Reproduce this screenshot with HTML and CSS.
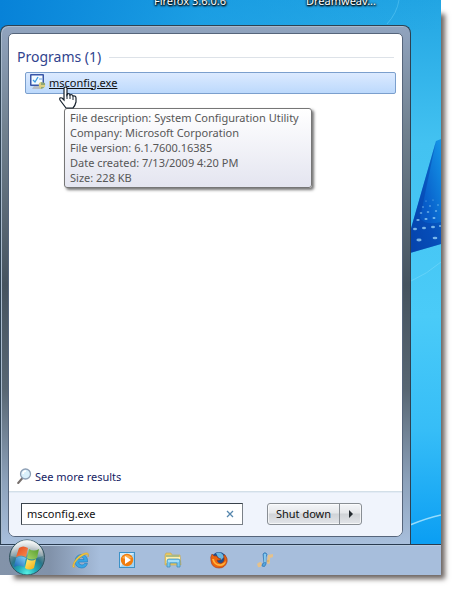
FILE: index.html
```html
<!DOCTYPE html>
<html lang="en">
<head>
<meta charset="utf-8">
<meta name="viewport" content="width=device-width, initial-scale=1">
<title>Start menu search</title>
<link rel="stylesheet" href="styles.css">
</head>
<body>
<main class="desktop">
  <svg class="wallpaper" viewBox="0 0 60 575" aria-hidden="true">
    <defs>
      <linearGradient id="fan" x1="0" y1="1" x2="1" y2="0"><stop offset="0" stop-color="#0649b0"/><stop offset=".45" stop-color="#075bc8"/><stop offset="1" stop-color="#1596e8"/></linearGradient>
    </defs>
    <path d="M6 24Q16 13 18 0" fill="none" stroke="#65cdf7" stroke-opacity=".5"/>
    <path d="M60 139L55 141Q46 172 29 232V253L60 244Z" fill="url(#fan)"/>
    <path d="M55 141Q47 170 29 232V253L60 244V222Q44 226 39 218Z" fill="#0439a2" opacity=".4"/>
    <g fill="#a9e2ff" opacity=".7">
      <ellipse cx="38" cy="240" rx="2.6" ry="1.4"/><ellipse cx="54" cy="238" rx="2.4" ry="1.3"/>
      <ellipse cx="34" cy="229" rx="2" ry="1.2"/><ellipse cx="43" cy="228" rx="2" ry="1.2"/><ellipse cx="52" cy="227" rx="2" ry="1.2"/><ellipse cx="59" cy="226" rx="1" ry="1"/>
      <ellipse cx="37" cy="220" rx="1.7" ry="1"/><ellipse cx="45" cy="219" rx="1.6" ry="1"/><ellipse cx="53" cy="218" rx="1.5" ry="1"/>
      <ellipse cx="40" cy="213" rx="1.3" ry=".8"/><ellipse cx="47" cy="212" rx="1.3" ry=".8"/><ellipse cx="55" cy="211" rx="1.2" ry=".8"/>
      <circle cx="42" cy="207" r=".8"/><circle cx="49" cy="206" r=".8"/><circle cx="57" cy="205" r=".7"/><circle cx="45" cy="201" r=".6"/><circle cx="52" cy="200" r=".6"/>
    </g>
    <path d="M30 281Q46 274 60 262" fill="none" stroke="#8fe0fc" stroke-opacity=".4"/>
    <path d="M29 525Q46 518 60 515" fill="none" stroke="#b5eaff" stroke-width="1.4" stroke-opacity=".8"/>
  </svg>

  <div class="labels"><span>Firefox 3.6.0.6</span><span>Dreamweav...</span></div>

  <section class="menu" aria-label="Start menu">
    <div class="panel">
      <div class="results">
        <h1 class="heading">Programs (1)</h1>
        <div class="entry">
          <a class="result" href="#msconfig">
            <svg width="16" height="16" viewBox="0 0 16 16" aria-hidden="true">
              <path d="M4 12H11V15H2Z" fill="#b7bdc5"/>
              <rect x="0" y="0" width="14" height="12" rx="1" fill="#3956a8"/>
              <rect x="1.500" y="1.500" width="11" height="9" fill="#f4fbff"/>
              <path d="M3 6L5 8L8 3" fill="none" stroke="#3b9ae0" stroke-width="1.3"/>
              <path d="M9 5H12" stroke="#75a9e3"/>
              <path d="M11 8L15 9Q16 14 11 15Q8 12 11 8Z" fill="#8fa777"/>
              <path d="M11 8V15Q8 13 9 9ZM11 11H15V13H11Z" fill="#ddcf80"/>
            </svg>
            <span>msconfig.exe</span>
          </a>
          <svg class="cursor" width="18" height="23" viewBox="0 0 18 23" aria-hidden="true">
            <path d="M5 2Q6 0 8 2V9L9 7.5Q11 7.500 11 9Q13 8 14 10Q17 9.500 17 12V16Q16 20 14 22H7Q4 18 1 14Q0 11 3 12L5 14Z" fill="#fff" stroke="#15202c" stroke-width="1.2"/>
            <path d="M8 8V13M11 9V13M14 10V14" stroke="#15202c"/>
          </svg>
          <div class="tooltip" role="tooltip">
            <p>File description: System Configuration Utility</p>
            <p>Company: Microsoft Corporation</p>
            <p>File version: 6.1.7600.16385</p>
            <p>Date created: 7/13/2009 4:20 PM</p>
            <p>Size: 228 KB</p>
          </div>
        </div>
        <a class="more" href="#more">
          <svg width="16" height="16" viewBox="0 0 16 16" aria-hidden="true">
            <path d="M5.500 10L1.200 15" stroke="#77706d" stroke-width="2" stroke-linecap="round"/>
            <circle cx="8.500" cy="6" r="5" fill="#d9f0fb" stroke="#8d9fb5" stroke-width="1.3"/>
            <path d="M6 6Q6 3 9 3" fill="none" stroke="#fff" stroke-width="1.5"/>
          </svg>
          <span>See more results</span>
        </a>
      </div>
      <form class="footer">
        <div class="search">
          <input type="text" value="msconfig.exe" aria-label="Search programs and files">
          <button class="clear" type="button" aria-label="Clear search">
            <svg width="8" height="8" viewBox="0 0 8 8" aria-hidden="true"><path d="M1 1L7 7M7 1L1 7" stroke="#5586ad" stroke-width="1.3"/></svg>
          </button>
        </div>
        <div class="power">
          <button class="shutdown" type="button">Shut down</button>
          <button class="options" type="button" aria-label="Shut down options">
            <svg width="4" height="8" viewBox="0 0 4 8" aria-hidden="true"><path d="M0 0L4 4L0 8Z" fill="#252b31"/></svg>
          </button>
        </div>
      </form>
    </div>
  </section>

  <nav class="taskbar" aria-label="Taskbar">
    <button class="orb" type="button" aria-label="Start">
      <svg width="38" height="36" viewBox="0 0 38 36" aria-hidden="true">
        <defs>
          <radialGradient id="orb" cx=".5" cy=".95" r=".9"><stop offset="0" stop-color="#57f1e2"/><stop offset=".3" stop-color="#20a9b8"/><stop offset=".55" stop-color="#28768a"/><stop offset=".8" stop-color="#82939a"/><stop offset="1" stop-color="#d3dcdd"/></radialGradient>
          <linearGradient id="shine" x1="0" y1="0" x2="0" y2="1"><stop offset="0" stop-color="#fff" stop-opacity=".75"/><stop offset="1" stop-color="#fff" stop-opacity=".15"/></linearGradient>
          <linearGradient id="red" x1="0" y1="0" x2="1" y2="1"><stop offset="0" stop-color="#e04a1c"/><stop offset="1" stop-color="#fb8a50"/></linearGradient>
          <linearGradient id="green" x1="1" y1="0" x2="0" y2="1"><stop offset="0" stop-color="#559c2d"/><stop offset="1" stop-color="#a5d468"/></linearGradient>
          <linearGradient id="blue" x1="0" y1="1" x2="1" y2="0"><stop offset="0" stop-color="#1761b4"/><stop offset="1" stop-color="#84d7fa"/></linearGradient>
          <linearGradient id="yellow" x1="1" y1="1" x2="0" y2="0"><stop offset="0" stop-color="#f4a80b"/><stop offset="1" stop-color="#fff07b"/></linearGradient>
        </defs>
        <circle cx="19" cy="18.500" r="17.500" fill="url(#orb)" stroke="#31535f"/>
        <path d="M3 17A16 16 0 0 1 35 17Q19 23 3 17Z" fill="url(#shine)"/>
        <path d="M11 9Q15 6 20 9L18 18Q13 15 8 18Z" fill="url(#red)"/>
        <path d="M21 10Q26 13 31 10L29 19Q24 22 19 19Z" fill="url(#green)"/>
        <path d="M8 19Q13 16 18 19L16 28Q11 25 6 28Z" fill="url(#blue)"/>
        <path d="M19 20Q24 23 28 20L26 29Q21 32 17 29Z" fill="url(#yellow)"/>
      </svg>
    </button>
    <div class="apps">
      <button type="button" aria-label="Internet Explorer">
        <svg width="18" height="18" viewBox="0 0 18 18" aria-hidden="true">
          <path d="M15.500 11H6.500Q7 14 10 14Q12 14 12.500 12.500H15.500Q14 17 9.500 17Q3 16.500 3 10Q3.500 4 9.500 3.500Q16 4 15.500 11ZM6.600 8.600H12Q12 6.300 9.500 6Q7 6.200 6.600 8.600Z" fill="#39a7e5" stroke="#1c78bd" stroke-width=".6"/>
          <path d="M3 16Q-1 18 2 11Q6 4 13 2Q18 1 16 6Q17 2 12 4Q6 7 3 12Q1 15 3 16Z" fill="#f6c93c" stroke="#d49b1d" stroke-width=".4"/>
        </svg>
      </button>
      <button type="button" aria-label="Media Player">
        <svg width="18" height="18" viewBox="0 0 18 18" aria-hidden="true">
          <rect x="1.500" y="1.500" width="15" height="15" fill="#a2d2f0" stroke="#3c91c7"/>
          <path d="M2 2H16L2 16Z" fill="#dff3fc" opacity=".8"/>
          <circle cx="9" cy="9" r="6.200" fill="#f17c0d"/><path d="M4 7Q9 1 14 7Q9 9 4 7Z" fill="#ffad4b"/>
          <path d="M7 5L13 9L7 13Z" fill="#fff"/>
        </svg>
      </button>
      <button type="button" aria-label="Explorer">
        <svg width="18" height="18" viewBox="0 0 18 18" aria-hidden="true">
          <path d="M1 4L2 2H7L8 4H16L17 14H1Z" fill="#e9c864" stroke="#c6a84e" stroke-width=".6"/>
          <path d="M2 6H16V12H2Z" fill="#fff1ae"/><path d="M2 5H15" stroke="#73b0a4"/>
          <path d="M3 10Q3 8 5 8H14Q16 8 16 10V16H13V12H6V16H3Z" fill="#79c7ed" stroke="#3989b9" stroke-width=".7"/>
          <path d="M4 10H15" stroke="#d5f4ff"/>
        </svg>
      </button>
      <button type="button" aria-label="Firefox">
        <svg width="18" height="18" viewBox="0 0 18 18" aria-hidden="true">
          <circle cx="9" cy="8.500" r="7.500" fill="#214f8d"/><path d="M6 2Q12 0 14 6L11 9Q7 6 6 2Z" fill="#6bb7e0"/>
          <path d="M2 3L4 5Q7 4 8 7L11 8Q9 10 7 9Q8 13 12 12Q15 10 14 6Q13 3 15 4Q18 8 17 11Q15 17 9 17Q2 17 1 10Q0 6 2 3Z" fill="#ec650e" stroke="#9d3515" stroke-width=".6"/>
          <path d="M2 8Q4 15 10 15Q15 15 16 10Q13 14 9 13Q5 13 4 8Z" fill="#ffb33c"/>
        </svg>
      </button>
      <button type="button" aria-label="Music">
        <svg width="18" height="18" viewBox="0 0 18 18" aria-hidden="true">
          <path d="M1 13Q5 9 6 13Q5 17 2 16ZM12 4L17 3V6L14 7V12Q12 14 11 12Z" fill="#e5c18b"/>
          <path d="M7 3Q8 1 10 2Q12 3 10 6V13Q9 17 6 15Q6 12 8 12Z" fill="#55a5dc" stroke="#3273af" stroke-width=".7"/>
          <path d="M9 3V11" stroke="#b9ecff"/><circle cx="12" cy="10" r="1.300" fill="#dab370"/>
        </svg>
      </button>
    </div>
  </nav>
</main>
</body>
</html>
```

FILE: styles.css
```css
* { box-sizing: border-box; }

body {
  min-height: 100vh;
  margin: 0;
  padding: 0 15px 15px 0;
  background: #fff;
  font: 11px/15px "Noto Sans", "Open Sans", sans-serif;
  color: #111;
}

button, input { font: inherit; color: inherit; }
button { padding: 0; border: 0; background: none; }
svg { display: block; flex: none; }
a { text-decoration: none; }

.desktop {
  position: relative;
  display: flex;
  flex-direction: column;
  height: calc(100vh - 15px);
  min-height: 400px;
  background:
    linear-gradient(90deg, #0782d8, rgba(20, 151, 226, .6) 45%, transparent) top / 100% 30px no-repeat,
    linear-gradient(#22a5e3, #43c2f1 25%, #4acbf8 55%, #36bdf7 75%, #0c9ff3 94%);
}

/* Soft drop shadow starting a little below the top-left corner */
.desktop::before {
  content: "";
  position: absolute;
  z-index: -1;
  inset: 12px 0 0 12px;
  box-shadow: 3px 3px 5px 1px #6c6562;
}

.wallpaper {
  position: absolute;
  top: 0;
  right: 0;
  width: 60px;
  height: 575px;
}

.labels {
  display: flex;
  align-items: flex-end;
  height: 8px;
  padding-left: 154px;
  gap: 80px;
  overflow: hidden;
  color: #fff;
  text-shadow: 1px 1px 2px #000, 0 0 2px #000, 0 1px 2px #000;
  white-space: nowrap;
  z-index: 1;
}

.menu {
  position: relative;
  display: flex;
  flex: 1;
  margin: 17px 30px 0 0;
  padding: 7px;
  border: 1px solid #2d4152;
  border-bottom: 0;
  border-radius: 8px 8px 0 0;
  background: linear-gradient(#91a4bf, #71818f 20%, #46535f 50%, #586672 70%, #8da2bb 88%, #a8bfdc);
  box-shadow: inset 1px 1px #a9bacd;
}

.panel {
  display: flex;
  flex: 1;
  flex-direction: column;
  min-width: 0;
  border: 1px solid #56657b;
  border-radius: 5px 5px 7px 7px;
  background: #fff;
}

.results {
  display: flex;
  flex: 1;
  flex-direction: column;
  padding: 14px 6px 7px 8px;
}

.heading {
  display: flex;
  align-items: center;
  gap: 8px;
  margin: 0 2px 6px 0;
  font-size: 14px;
  line-height: 18px;
  font-weight: 400;
  color: #31448e;
}

.heading::after {
  content: "";
  flex: 1;
  border-top: 1px solid #dde2e8;
}

.entry {
  position: relative;
  margin-left: 8px;
}

.result {
  display: flex;
  align-items: center;
  gap: 3px;
  height: 22px;
  padding: 0 0 2px 4px;
  border: 1px solid #7b9fcd;
  border-radius: 2px;
  background: linear-gradient(#dceaff, #bcd9fc);
  color: #111;
}

.result span { text-decoration: underline; }

.cursor {
  position: absolute;
  z-index: 3;
  left: 34px;
  top: 14px;
}

.tooltip {
  position: absolute;
  z-index: 2;
  top: 36px;
  left: 39px;
  padding: 1px 12px 2px 5px;
  border: 1px solid #767676;
  border-radius: 3px;
  background: linear-gradient(#fff, #e4e5f0);
  box-shadow: 2px 2px 3px rgba(0, 0, 0, .55);
  color: #575757;
  white-space: nowrap;
}

.tooltip p { margin: 0; }

.more {
  display: flex;
  align-items: center;
  align-self: flex-start;
  gap: 2px;
  margin-top: auto;
  color: #151c64;
}

.footer {
  display: flex;
  align-items: flex-start;
  gap: 24px;
  padding: 11px 12px;
  border-top: 1px solid #d3dfe8;
  border-radius: 0 0 6px 6px;
  background: #f0f4fc;
  box-shadow: inset 0 1px #e3ebf5;
}

.search {
  display: flex;
  flex: 0 1 222px;
  height: 22px;
  border: 1px solid #7a8087;
  border-top-color: #39424b;
  border-left-color: #39424b;
  background: #fff;
}

.search input {
  flex: 1;
  min-width: 0;
  padding: 0 5px 1px;
  border: 0;
  outline: 0;
  background: none;
}

.clear {
  display: grid;
  place-items: center;
  width: 24px;
}

.power {
  display: flex;
  height: 22px;
  border: 1px solid #898e94;
  border-radius: 3px;
  background: linear-gradient(#f4f5f8, #e5e7ea 45%, #d0d3d7 50%, #e3e5e9);
  box-shadow: inset 0 0 0 1px rgba(255, 255, 255, .65);
}

.shutdown {
  width: 71px;
  padding-bottom: 2px;
  white-space: nowrap;
}

.options {
  display: grid;
  place-items: center;
  width: 22px;
  border-left: 1px solid #898e94;
}

.taskbar {
  position: relative;
  display: flex;
  align-items: flex-end;
  height: 31px;
  padding-left: 8px;
  border-top: 1px solid #293b50;
  background: linear-gradient(90deg, #8393a9, #8192aa 50px, #a7bedc 100px);
  box-shadow: inset 0 1px #b7cbe1;
}

.apps {
  display: flex;
  gap: 28px;
  margin-left: 26px;
  padding-bottom: 6px;
}
```
